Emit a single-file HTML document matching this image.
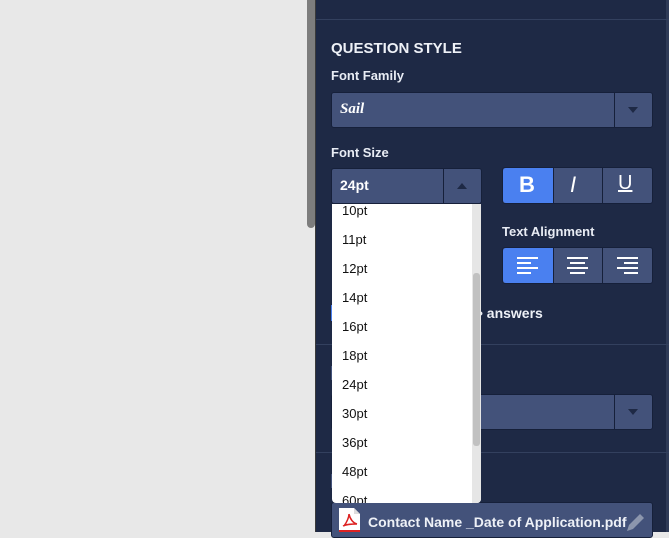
<!DOCTYPE html>
<html><head><style>
*{margin:0;padding:0;box-sizing:border-box}
body{width:669px;height:532px;overflow:hidden;background:#e8e8e8;font-family:"Liberation Sans",sans-serif;position:relative}
.abs{position:absolute}
.panel{left:316px;top:0;width:353px;height:532px;background:#1e2945}
.lbl{color:#e8ecf4;font-weight:bold;font-size:13px}
.box{background:#43527a;border-radius:3px;border:1px solid #16203a}
.div{background:#16203a;width:1px}
.hr{left:316px;width:353px;height:1px;background:#33405e}
.tri{width:0;height:0;border-left:5px solid transparent;border-right:5px solid transparent}
.item{position:absolute;left:10px;font-size:13px;color:#111}
.bar{position:absolute;height:2px;background:#fff}
</style></head><body>
<div class="abs" style="left:307px;top:0;width:8px;height:228px;background:#7d7d7d;border-radius:0 0 4px 4px"></div>
<div class="abs" style="left:315px;top:0;width:2px;height:532px;background:#3a3a3a"></div>
<div class="abs panel"></div>
<div class="abs" style="left:666px;top:0;width:3px;height:532px;background:#2f3b57"></div>
<div class="abs hr" style="top:19px"></div>
<div class="abs" style="left:331px;top:40px;color:#eef1f7;font-weight:bold;font-size:15px">QUESTION STYLE</div>
<div class="abs lbl" style="left:331px;top:68px">Font Family</div>
<div class="abs box" style="left:331px;top:92px;width:322px;height:36px"></div>
<div class="abs div" style="left:614px;top:93px;height:34px"></div>
<div class="abs" style="left:340px;top:101px;color:#fff;font-family:'Liberation Serif',serif;font-style:italic;font-weight:bold;font-size:15px">Sail</div>
<div class="abs tri" style="left:628px;top:107px;border-top:6px solid #1e2945"></div>
<div class="abs lbl" style="left:331px;top:145px">Font Size</div>
<div class="abs box" style="left:331px;top:168px;width:151px;height:36px"></div>
<div class="abs div" style="left:443px;top:169px;height:34px"></div>
<div class="abs" style="left:340px;top:177px;color:#fff;font-weight:bold;font-size:14px">24pt</div>
<div class="abs tri" style="left:457px;top:183px;border-bottom:6px solid #1e2945"></div>
<div class="abs box" style="left:502px;top:167px;width:151px;height:37px"></div>
<div class="abs" style="left:503px;top:168px;width:50px;height:35px;background:#4a80f0;border-radius:3px 0 0 3px"></div>
<div class="abs div" style="left:553px;top:168px;height:35px"></div>
<div class="abs div" style="left:602px;top:168px;height:35px"></div>
<div class="abs" style="left:519px;top:172px;color:#fff;font-size:22px;font-weight:bold">B</div>
<div class="abs" style="left:570px;top:172px;color:#fff;font-size:22px;font-style:italic">I</div>
<div class="abs" style="left:618px;top:172px;color:#fff;font-size:20px;text-decoration:underline">U</div>
<div class="abs lbl" style="left:502px;top:224px">Text Alignment</div>
<div class="abs box" style="left:502px;top:247px;width:151px;height:37px"></div>
<div class="abs" style="left:503px;top:248px;width:50px;height:35px;background:#4a80f0;border-radius:3px 0 0 3px"></div>
<div class="abs div" style="left:553px;top:248px;height:35px"></div>
<div class="abs div" style="left:602px;top:248px;height:35px"></div>
<div class="bar" style="left:517px;top:257px;width:21px"></div><div class="bar" style="left:517px;top:262px;width:14px"></div><div class="bar" style="left:517px;top:267px;width:21px"></div><div class="bar" style="left:517px;top:272px;width:14px"></div>
<div class="bar" style="left:567px;top:257px;width:21px"></div><div class="bar" style="left:570px;top:262px;width:15px"></div><div class="bar" style="left:567px;top:267px;width:21px"></div><div class="bar" style="left:570px;top:272px;width:15px"></div>
<div class="bar" style="left:617px;top:257px;width:21px"></div><div class="bar" style="left:624px;top:262px;width:14px"></div><div class="bar" style="left:617px;top:267px;width:21px"></div><div class="bar" style="left:624px;top:272px;width:14px"></div>
<div class="abs" style="left:331px;top:305px;width:8px;height:16px;background:#4a80f0"></div>
<div class="abs" style="left:478px;top:305px;color:#eef1f7;font-weight:bold;font-size:14px">• answers</div>
<div class="abs hr" style="top:344px"></div>
<div class="abs" style="left:331px;top:366px;width:6px;height:14px;background:#43527a"></div>
<div class="abs box" style="left:331px;top:394px;width:322px;height:36px"></div>
<div class="abs div" style="left:614px;top:395px;height:34px"></div>
<div class="abs tri" style="left:628px;top:409px;border-top:6px solid #1e2945"></div>
<div class="abs hr" style="top:452px"></div>
<div class="abs" style="left:331px;top:474px;width:6px;height:14px;background:#43527a"></div>
<div class="abs box" style="left:331px;top:502px;width:322px;height:36px"></div>
<svg class="abs" style="left:338px;top:508px" width="24" height="24"><path d="M1 0h15l6 6v18H1z" fill="#fff"/><path d="M16 0v6h6" fill="#ddd"/><rect x="1" y="22" width="21" height="2" fill="#d22"/><path d="M6 18c3-4 5-9 5-12M11 6c1 5 4 9 8 10M5 18c4-2 9-2 14-2" stroke="#d22" stroke-width="1.5" fill="none"/></svg>
<div class="abs" style="left:368px;top:514px;color:#eef1f7;font-weight:bold;font-size:14px">Contact Name _Date of Application.pdf</div>
<svg class="abs" style="left:624px;top:512px" width="22" height="20"><path d="M3 19l2-6 11-11 4 4-11 11z" fill="#8c96ad"/></svg>
<div class="abs" style="left:332px;top:204px;width:149px;height:299px;background:#fff;border-radius:0 0 4px 4px;overflow:hidden">
<div class="abs" style="left:140px;top:0;width:9px;height:299px;background:#e6e6e6"></div>
<div class="abs" style="left:141px;top:69px;width:7px;height:173px;background:#c1c1c1;border-radius:3px"></div>
<div class="item" style="top:-1px">10pt</div>
<div class="item" style="top:28px">11pt</div>
<div class="item" style="top:57px">12pt</div>
<div class="item" style="top:86px">14pt</div>
<div class="item" style="top:115px">16pt</div>
<div class="item" style="top:144px">18pt</div>
<div class="item" style="top:173px">24pt</div>
<div class="item" style="top:202px">30pt</div>
<div class="item" style="top:231px">36pt</div>
<div class="item" style="top:260px">48pt</div>
<div class="item" style="top:289px">60pt</div>
</div>
</body></html>
